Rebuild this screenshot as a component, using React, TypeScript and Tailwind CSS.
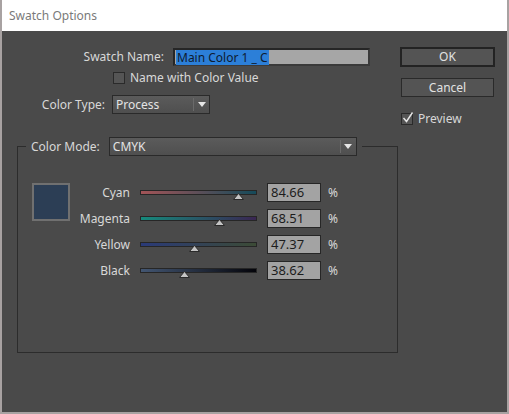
const font = { fontFamily: '"Noto Sans", "Open Sans", sans-serif' };

type Row = { name: string; value: string; pos: number; from: string; to: string };

const rows: Row[] = [
  { name: "Cyan", value: "84.66", pos: 98, from: "#a35457", to: "#154a5a" },
  { name: "Magenta", value: "68.51", pos: 79, from: "#158a7c", to: "#3a2652" },
  { name: "Yellow", value: "47.37", pos: 54, from: "#2a3a78", to: "#3c4b36" },
  { name: "Black", value: "38.62", pos: 44, from: "#435672", to: "#04040a" },
];

function Arrow() {
  return (
    <svg width="8" height="5" viewBox="0 0 8 5" className="block">
      <path d="M0 0 H8 L4 5 Z" fill="#e6e6e6" />
    </svg>
  );
}

function Dropdown({ value, width }: { value: string; width: string }) {
  return (
    <div
      className={`${width} h-[19px] flex items-center border border-[#2a2a2a] bg-gradient-to-b from-[#5b5b5b] to-[#4f4f4f] text-[12px] text-[#e4e4e4]`}
    >
      <span className="flex-1 pl-[3px] leading-none">{value}</span>
      <span className="w-px h-[13px] bg-[#3a3a3a] border-r border-[#6a6a6a]" />
      <span className="w-[15px] flex justify-center">
        <Arrow />
      </span>
    </div>
  );
}

function Slider({ row }: { row: Row }) {
  return (
    <div className="relative w-[117px] h-[19px] flex items-center">
      <div
        className="w-full h-[5px] border border-[#262626]"
        style={{ background: `linear-gradient(to right, ${row.from}, ${row.to})` }}
      />
      <svg
        width="11"
        height="7"
        viewBox="0 0 11 7"
        className="absolute top-[10px]"
        style={{ left: row.pos - 5 }}
      >
        <path d="M5.5 0.5 L10.5 6.5 H0.5 Z" fill="#c4c4c4" stroke="#2a2a2a" strokeWidth="1" />
      </svg>
    </div>
  );
}

function Check({ checked }: { checked?: boolean }) {
  return (
    <span className="relative w-[12px] h-[12px] border border-[#2a2a2a] bg-[#555] block">
      {checked && (
        <svg width="12" height="12" viewBox="0 0 12 12" className="absolute left-[0px] top-[-2px]">
          <path d="M1.5 6 L4.5 9.5 L10.5 0.5" fill="none" stroke="#e6e6e6" strokeWidth="1.4" />
        </svg>
      )}
    </span>
  );
}

export default function App() {
  return (
    <div
      className="w-[509px] h-[414px] flex flex-col bg-[#4a4a4a] border-x-2 border-b-2 border-[#a8a2a2] text-[12px] text-[#d8d8d8]"
      style={font}
    >
      <div className="h-[31px] shrink-0 bg-white flex items-center pl-[7px] text-[12px] text-[#7a7a7a]">
        Swatch Options
      </div>
      <div className="flex">
        <div className="w-[396px]">
          <div className="mt-[17px] flex items-center h-[18px]">
            <span className="w-[162px] text-right">Swatch Name:</span>
            <div className="ml-[9px] w-[197px] h-[18px] bg-[#a6a6a6] border-2 border-[#262626] border-r-[#3a3a3a] border-b-[#3a3a3a] flex items-center pl-[1px]">
              <span className="bg-[#2c7fd8] text-[#0e1b30] px-[1px] leading-[15px]">Main Color 1 _ C</span>
            </div>
          </div>
          <div className="mt-[6px] flex items-center h-[12px] pl-[111px] gap-[5px]">
            <Check />
            <span className="leading-none">Name with Color Value</span>
          </div>
          <div className="mt-[11px] flex items-center">
            <span className="w-[103px] text-right">Color Type:</span>
            <div className="ml-[7px]">
              <Dropdown value="Process" width="w-[98px]" />
            </div>
          </div>
          <fieldset className="mt-[23px] ml-[15px] w-[381px] border border-[#2c2c2c] pb-[72px]">
            <legend className="ml-[8px] px-[5px] flex items-center">
              <span className="mr-[9px]">Color Mode:</span>
              <Dropdown value="CMYK" width="w-[248px]" />
            </legend>
            <div className="mt-[27px] ml-[14px] flex">
              <div className="w-[38px] h-[38px] border-2 border-[#707070] bg-[#2c3e55]" />
              <div className="flex flex-col gap-[7px]">
                {rows.map((row) => (
                  <div key={row.name} className="flex items-center h-[19px]">
                    <span className="w-[60px] text-right">{row.name}</span>
                    <div className="ml-[10px]">
                      <Slider row={row} />
                    </div>
                    <div className="ml-[10px] w-[54px] h-[19px] bg-[#a3a3a3] border border-[#262626] text-[#1c1c1c] flex items-center pl-[3px] text-[13px]">
                      {row.value}
                    </div>
                    <span className="ml-[7px]">%</span>
                  </div>
                ))}
              </div>
            </div>
          </fieldset>
        </div>
        <div className="w-[95px] ml-[2px] flex flex-col">
          <button className="mt-[16px] h-[20px] border-2 border-[#232323] bg-[#545454] text-[#e2e2e2] leading-none">
            OK
          </button>
          <button className="mt-[11px] mx-[1px] h-[19px] border border-[#2a2a2a] bg-[#545454] text-[#e2e2e2] leading-none">
            Cancel
          </button>
          <div className="mt-[15px] ml-[1px] flex items-center gap-[5px] h-[13px]">
            <Check checked />
            <span className="leading-none">Preview</span>
          </div>
        </div>
      </div>
    </div>
  );
}
